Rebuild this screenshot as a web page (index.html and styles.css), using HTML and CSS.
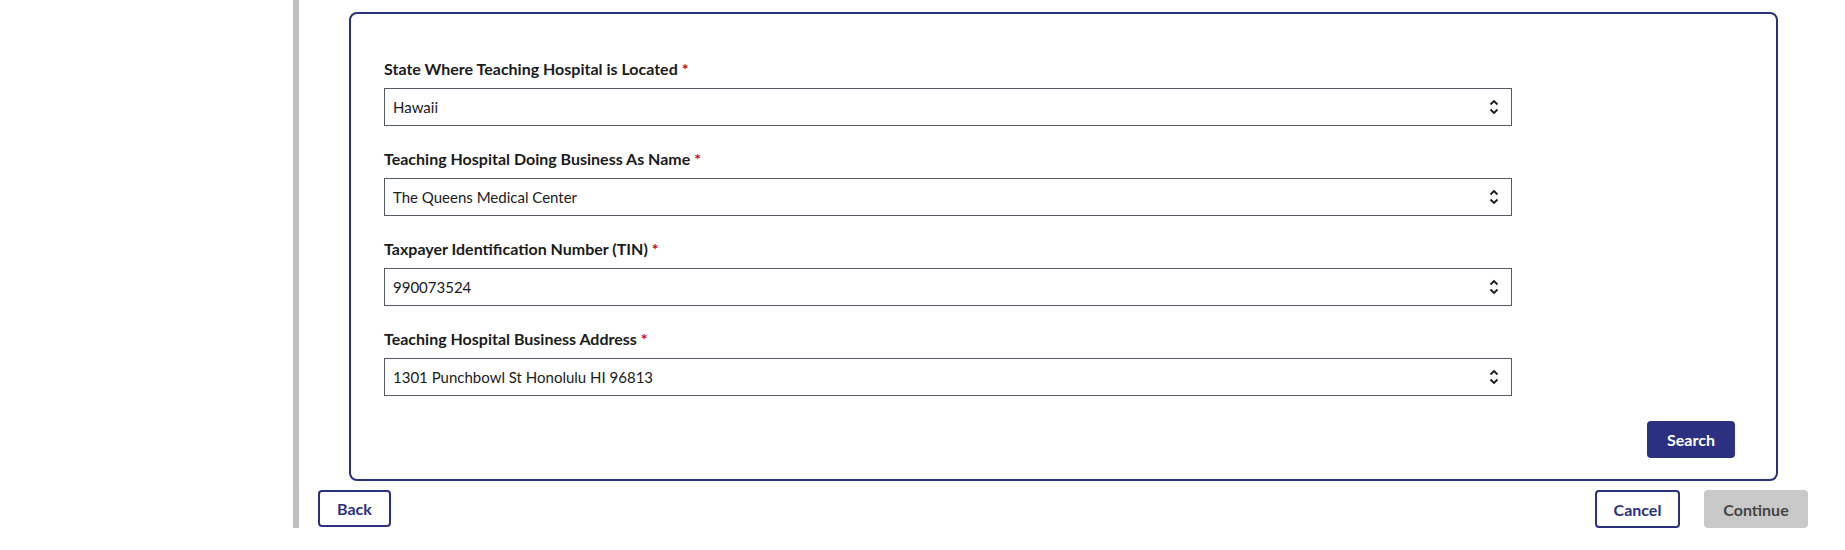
FILE: index.html
```html
<!DOCTYPE html>
<html>
<head>
<meta charset="utf-8">
<link rel="stylesheet" href="styles.css">
</head>
<body>
<div class="page">
  <aside class="sidebar"></aside>
  <main class="main">
    <section class="card">
      <div class="field">
        <label class="label">State Where Teaching Hospital is Located <span class="req">*</span></label>
        <div class="select"><span>Hawaii</span><svg class="chev" width="10" height="16" viewBox="0 0 10 16"><path d="M1.5 5.5 L5 2 L8.5 5.5 M1.5 10.5 L5 14 L8.5 10.5" fill="none" stroke="#1b1b1b" stroke-width="1.8"/></svg></div>
      </div>
      <div class="field">
        <label class="label">Teaching Hospital Doing Business As Name <span class="req">*</span></label>
        <div class="select"><span>The Queens Medical Center</span><svg class="chev" width="10" height="16" viewBox="0 0 10 16"><path d="M1.5 5.5 L5 2 L8.5 5.5 M1.5 10.5 L5 14 L8.5 10.5" fill="none" stroke="#1b1b1b" stroke-width="1.8"/></svg></div>
      </div>
      <div class="field">
        <label class="label">Taxpayer Identification Number (TIN) <span class="req">*</span></label>
        <div class="select"><span>990073524</span><svg class="chev" width="10" height="16" viewBox="0 0 10 16"><path d="M1.5 5.5 L5 2 L8.5 5.5 M1.5 10.5 L5 14 L8.5 10.5" fill="none" stroke="#1b1b1b" stroke-width="1.8"/></svg></div>
      </div>
      <div class="field">
        <label class="label">Teaching Hospital Business Address <span class="req">*</span></label>
        <div class="select"><span>1301 Punchbowl St Honolulu HI 96813</span><svg class="chev" width="10" height="16" viewBox="0 0 10 16"><path d="M1.5 5.5 L5 2 L8.5 5.5 M1.5 10.5 L5 14 L8.5 10.5" fill="none" stroke="#1b1b1b" stroke-width="1.8"/></svg></div>
      </div>
      <div class="card-actions">
        <button class="btn btn-primary">Search</button>
      </div>
    </section>
    <div class="nav-row">
      <button class="btn btn-outline btn-back">Back</button>
      <div class="nav-right">
        <button class="btn btn-outline btn-cancel">Cancel</button>
        <button class="btn btn-disabled btn-continue">Continue</button>
      </div>
    </div>
  </main>
</div>
</body>
</html>
```

FILE: styles.css
```css
* { box-sizing: border-box; }
html, body { margin: 0; padding: 0; background: #fff; }
body { font-family: "Lato", "Liberation Sans", sans-serif; color: #1b1b1b; }

.page { display: flex; width: 1845px; }
.sidebar { width: 293px; flex: none; }
.main {
  flex: 1;
  border-left: 6px solid #bfbfbf;
  height: 528px;
  padding: 12px 37px 0 19px;
}

.card {
  margin: 0 30px 0 31px;
  border: 2px solid #2b3180;
  border-radius: 8px;
  padding: 45px 41px 21px 33px;
}

.field { max-width: 1128px; margin-bottom: 23px; }
.label {
  display: block;
  font-weight: 700;
  font-size: 16px;
  line-height: 20px;
  margin-bottom: 9px;
}
.req { color: #d0021b; }

.select {
  height: 38px;
  border: 1px solid #565c65;
  display: flex;
  align-items: center;
  justify-content: space-between;
  padding: 0 12px 0 8px;
  font-size: 15px;
  color: #1b1b1b;
}
.chev { display: block; }

.card-actions {
  display: flex;
  justify-content: flex-end;
  margin-top: 25px;
}

.btn {
  font-family: "Lato", "Liberation Sans", sans-serif;
  font-weight: 700;
  font-size: 16px;
  height: 38px;
  border-radius: 4px;
  cursor: pointer;
  padding: 0;
}
.btn-primary {
  background: #2b3180;
  color: #fff;
  border: none;
  width: 88px;
  height: 37px;
}
.btn-outline {
  background: #fff;
  color: #2b3180;
  border: 2px solid #2b3180;
}
.btn-back { width: 73px; height: 37px; }
.btn-cancel { width: 85px; }
.btn-disabled {
  background: #c9c9c9;
  color: #454545;
  border: none;
  width: 104px;
}

.nav-row {
  display: flex;
  justify-content: space-between;
  margin-top: 9px;
}
.nav-right { display: flex; gap: 24px; }
```
